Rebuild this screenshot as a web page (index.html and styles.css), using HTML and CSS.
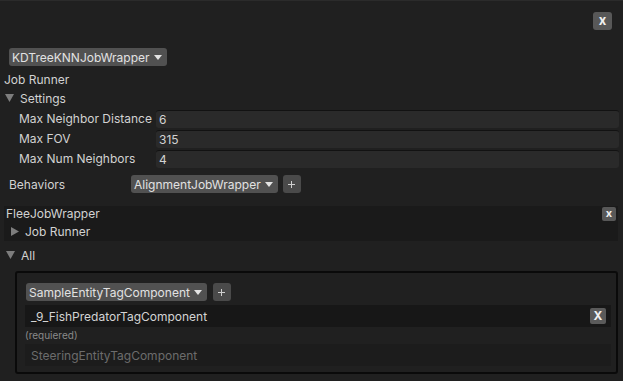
FILE: index.html
```html
<!DOCTYPE html>
<html lang="en">
<head>
    <meta charset="UTF-8">
    <meta name="viewport" content="width=device-width, initial-scale=1.0">
    <title>Steering Inspector</title>
    <link rel="stylesheet" href="styles.css">
</head>
<body>
    <div class="inspector">
        <!-- Close bar -->
        <div class="toolbar">
            <span class="btn-x">x</span>
        </div>

        <!-- Job wrapper type -->
        <div class="type-picker">
            <span class="dropdown">KDTreeKNNJobWrapper
                <svg class="caret" width="8" height="5" viewBox="0 0 8 5"><path d="M0 0h8L4 5z" fill="#e4e4e4"/></svg>
            </span>
        </div>

        <div class="label-line">Job Runner</div>
        <div class="foldout">
            <svg class="arrow" width="9" height="8" viewBox="0 0 9 8"><path d="M0 0h9L4.5 8z" fill="#7d7d7d"/></svg>
            Settings
        </div>

        <div class="props">
            <span class="prop-label">Max Neighbor Distance</span>
            <span class="field">6</span>
            <span class="prop-label">Max FOV</span>
            <span class="field">315</span>
            <span class="prop-label">Max Num Neighbors</span>
            <span class="field">4</span>
        </div>

        <div class="behaviors">
            <span class="behaviors-label">Behaviors</span>
            <span class="dropdown">AlignmentJobWrapper
                <svg class="caret" width="8" height="5" viewBox="0 0 8 5"><path d="M0 0h8L4 5z" fill="#e4e4e4"/></svg>
            </span>
            <span class="btn-plus">
                <svg width="7" height="7" viewBox="0 0 7 7"><path d="M3 0h1v3h3v1H4v3H3V4H0V3h3z" fill="#cfcfcf"/></svg>
            </span>
        </div>

        <!-- Behavior entry -->
        <div class="behavior-block">
            <div class="behavior-head">
                <span>FleeJobWrapper</span>
                <span class="btn-x small">x</span>
            </div>
            <div class="foldout nested">
                <svg class="arrow" width="8" height="9" viewBox="0 0 8 9"><path d="M0 0v9l8-4.5z" fill="#7d7d7d"/></svg>
                Job Runner
            </div>
        </div>

        <div class="foldout all">
            <svg class="arrow" width="9" height="8" viewBox="0 0 9 8"><path d="M0 0h9L4.5 8z" fill="#7d7d7d"/></svg>
            All
        </div>

        <!-- Tag filter -->
        <div class="tag-box">
            <div class="add-row">
                <span class="dropdown">SampleEntityTagComponent
                    <svg class="caret" width="8" height="5" viewBox="0 0 8 5"><path d="M0 0h8L4 5z" fill="#e4e4e4"/></svg>
                </span>
                <span class="btn-plus">
                    <svg width="7" height="7" viewBox="0 0 7 7"><path d="M3 0h1v3h3v1H4v3H3V4H0V3h3z" fill="#cfcfcf"/></svg>
                </span>
            </div>
            <div class="tag-row">
                <span>_9_FishPredatorTagComponent</span>
                <span class="btn-x tag">X</span>
            </div>
            <div class="hint">(requiered)</div>
            <div class="tag-row locked">
                <span>SteeringEntityTagComponent</span>
            </div>
        </div>
    </div>
</body>
</html>
```

FILE: styles.css
```css
* {
    margin: 0;
    padding: 0;
    box-sizing: border-box;
}

body {
    font-family: Inter, "Noto Sans", sans-serif;
    font-size: 12px;
    background-color: #202020;
    color: #d2d2d2;
    overflow: hidden;
}

.inspector {
    height: 381px;
    border-top: 1px solid #2b2b2b;
}

/* Buttons */
.btn-x {
    display: flex;
    align-items: center;
    justify-content: center;
    width: 19px;
    height: 18px;
    background-color: #585858;
    border-radius: 3px;
    color: #f0f0f0;
    font-weight: 700;
    font-size: 13px;
    line-height: 1;
    padding-bottom: 2px;
}

.btn-x.small {
    width: 14px;
    height: 14px;
    font-size: 11px;
    border-radius: 2px;
    margin: 1px 2px 0 0;
}

.btn-x.tag {
    width: 16px;
    height: 16px;
    font-size: 12px;
    border-radius: 2px;
    padding-bottom: 0;
    background-color: #5a5a5a;
}

.btn-plus {
    display: flex;
    align-items: center;
    justify-content: center;
    width: 18px;
    height: 18px;
    background-color: #4a4a4a;
    border-radius: 3px;
}

.dropdown {
    display: inline-flex;
    align-items: center;
    gap: 4px;
    height: 18px;
    padding: 0 5px 0 3px;
    background-color: #515151;
    border-radius: 3px;
    color: #e2e2e2;
}

.caret {
    margin-top: 1px;
}

/* Top */
.toolbar {
    display: flex;
    justify-content: flex-end;
    padding: 11px 11px 0 0;
}

.type-picker {
    display: flex;
    margin-top: 18px;
    padding-left: 9px;
}

.label-line {
    height: 18px;
    line-height: 18px;
    margin-top: 5px;
    padding-left: 4px;
}

.foldout {
    display: flex;
    align-items: center;
    height: 18px;
    padding-left: 5px;
}

.foldout .arrow {
    margin-right: 6px;
}

/* Settings */
.props {
    display: grid;
    grid-template-columns: 137px 1fr;
    row-gap: 2px;
    margin-top: 3px;
    padding: 0 4px 0 19px;
}

.prop-label {
    height: 18px;
    line-height: 18px;
}

.field {
    height: 18px;
    line-height: 17px;
    padding-left: 3px;
    background-color: #2a2a2a;
    border-top: 1px solid #121212;
    border-radius: 3px;
}

.behaviors {
    display: flex;
    align-items: center;
    gap: 5px;
    margin-top: 7px;
    padding-left: 9px;
}

.behaviors-label {
    width: 117px;
}

/* Behavior entry */
.behavior-block {
    height: 35px;
    margin: 13px 5px 0 4px;
    background-color: #1a1a1a;
}

.behavior-head {
    display: flex;
    justify-content: space-between;
    height: 16px;
    line-height: 16px;
    padding-left: 2px;
}

.foldout.nested {
    padding-left: 7px;
}

.foldout.all {
    margin-top: 5px;
    padding-left: 6px;
}

/* Tag filter box */
.tag-box {
    margin: 7px 5px 0 15px;
    padding: 10px 5px 6px 8px;
    border: 2px solid #0a0a0a;
    border-radius: 3px;
}

.add-row {
    display: flex;
    gap: 6px;
    padding-left: 1px;
}

.tag-row {
    display: flex;
    align-items: center;
    justify-content: space-between;
    height: 22px;
    margin-top: 4px;
    padding: 0 5px 0 6px;
    background-color: #171717;
    color: #d4d4d4;
}

.hint {
    height: 17px;
    line-height: 17px;
    font-size: 10px;
    color: #8a8a8a;
}

.tag-row.locked {
    margin-top: 0;
    background-color: #1c1c1c;
    color: #6c6c6c;
}
```
